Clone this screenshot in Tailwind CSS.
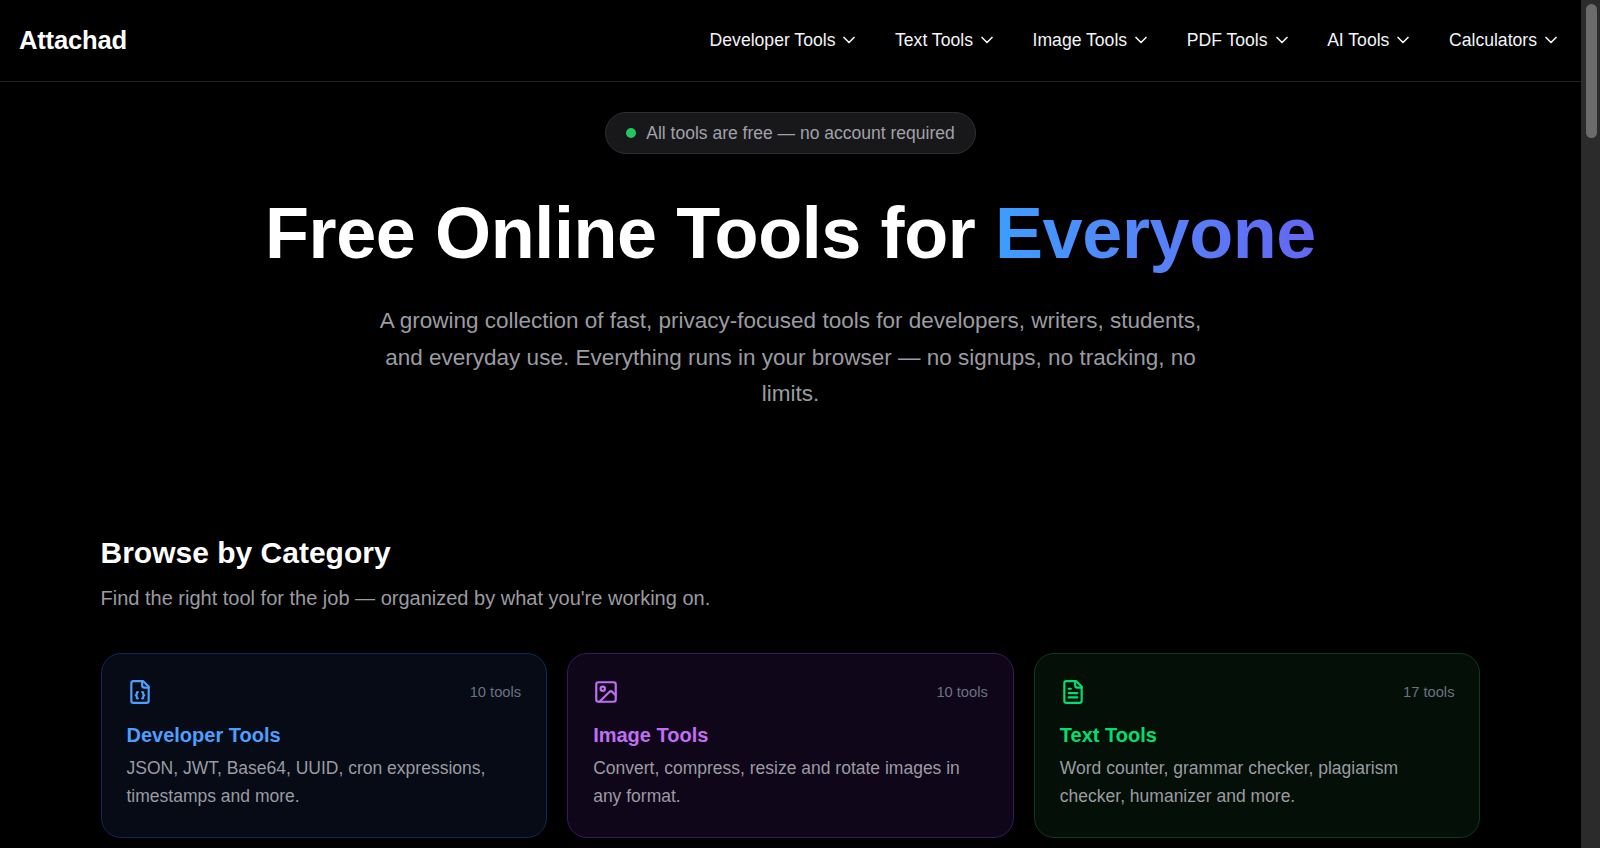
<!DOCTYPE html>
<html lang="en">
<head>
    <meta charset="UTF-8">
    <meta name="viewport" content="width=device-width, initial-scale=1.0">
    <title>Attachad - Free Online Tools for Everyone</title>
    <script src="https://cdn.jsdelivr.net/npm/@tailwindcss/browser@4"></script>
</head>
<body class="bg-black text-white font-['Liberation_Sans',Arial,sans-serif] h-screen overflow-hidden flex">
    <div class="flex-1 min-w-0">
        <!-- Header -->
        <header class="h-[82px] border-b border-[#222222] flex items-center justify-between pl-[19px] pr-5">
            <a href="#" class="text-[25.6px] tracking-[-0.2px] font-bold">Attachad</a>
            <nav class="flex items-center gap-[35.6px] text-[17.6px] text-[#f3f4f6]">
                <a href="#" class="flex items-center gap-1">Developer Tools <svg class="w-5 h-5" viewBox="0 0 24 24" fill="none" stroke="currentColor" stroke-width="2" stroke-linecap="round" stroke-linejoin="round"><path d="m6 9 6 6 6-6"/></svg></a>
                <a href="#" class="flex items-center gap-1">Text Tools <svg class="w-5 h-5" viewBox="0 0 24 24" fill="none" stroke="currentColor" stroke-width="2" stroke-linecap="round" stroke-linejoin="round"><path d="m6 9 6 6 6-6"/></svg></a>
                <a href="#" class="flex items-center gap-1">Image Tools <svg class="w-5 h-5" viewBox="0 0 24 24" fill="none" stroke="currentColor" stroke-width="2" stroke-linecap="round" stroke-linejoin="round"><path d="m6 9 6 6 6-6"/></svg></a>
                <a href="#" class="flex items-center gap-1">PDF Tools <svg class="w-5 h-5" viewBox="0 0 24 24" fill="none" stroke="currentColor" stroke-width="2" stroke-linecap="round" stroke-linejoin="round"><path d="m6 9 6 6 6-6"/></svg></a>
                <a href="#" class="flex items-center gap-1">AI Tools <svg class="w-5 h-5" viewBox="0 0 24 24" fill="none" stroke="currentColor" stroke-width="2" stroke-linecap="round" stroke-linejoin="round"><path d="m6 9 6 6 6-6"/></svg></a>
                <a href="#" class="flex items-center gap-1">Calculators <svg class="w-5 h-5" viewBox="0 0 24 24" fill="none" stroke="currentColor" stroke-width="2" stroke-linecap="round" stroke-linejoin="round"><path d="m6 9 6 6 6-6"/></svg></a>
            </nav>
        </header>

        <!-- Hero -->
        <section class="flex flex-col items-center text-center pt-[30px]">
            <div class="h-[42px] flex items-center gap-2.5 px-5 rounded-full bg-[#18181b] border border-[#2e2e32] text-[17.5px] text-[#a1a1aa]">
                <span class="w-2.5 h-2.5 rounded-full bg-[#22c55e]"></span>
                All tools are free — no account required
            </div>
            <h1 class="mt-[34px] text-[72px] leading-[90px] font-bold tracking-[-0.4px]">Free Online Tools for <span class="bg-linear-to-r from-[#3b9dff] to-[#6366f1] bg-clip-text text-transparent">Everyone</span></h1>
            <p class="mt-[25px] w-[840px] text-[22.5px] leading-[36.5px] text-[#9b9ba1]">A growing collection of fast, privacy-focused tools for developers, writers, students, and everyday use. Everything runs in your browser — no signups, no tracking, no limits.</p>
        </section>

        <!-- Categories -->
        <section class="w-[1380px] mx-auto mt-[122.5px]">
            <h2 class="text-[30px] leading-[36px] font-bold">Browse by Category</h2>
            <p class="mt-[13px] text-xl leading-7 text-[#9b9ba1]">Find the right tool for the job — organized by what you're working on.</p>
            <div class="grid grid-cols-3 gap-5 mt-[41px]">
                <a href="#" class="h-[185px] rounded-[20px] border border-[#10285a] bg-[#060b16] px-[25px] pt-[25px] block">
                    <div class="flex items-center justify-between text-[#4d9fff]">
                        <svg class="w-[26px] h-[26px]" viewBox="0 0 24 24" fill="none" stroke="currentColor" stroke-width="2" stroke-linecap="round" stroke-linejoin="round"><path d="M15 2H6a2 2 0 0 0-2 2v16a2 2 0 0 0 2 2h12a2 2 0 0 0 2-2V7Z"/><path d="M14 2v4a2 2 0 0 0 2 2h4"/><path d="M10 12a1 1 0 0 0-1 1v1a1 1 0 0 1-1 1 1 1 0 0 1 1 1v1a1 1 0 0 0 1 1"/><path d="M14 18a1 1 0 0 0 1-1v-1a1 1 0 0 1 1-1 1 1 0 0 1-1-1v-1a1 1 0 0 0-1-1"/></svg>
                        <span class="text-[14.7px] text-[#6b7280]">10 tools</span>
                    </div>
                    <h3 class="mt-4 text-xl leading-7 font-bold text-[#4d9fff]">Developer Tools</h3>
                    <p class="mt-[5px] text-[17.5px] leading-7 text-[#9b9ba1]">JSON, JWT, Base64, UUID, cron expressions, timestamps and more.</p>
                </a>
                <a href="#" class="h-[185px] rounded-[20px] border border-[#3a1a5c] bg-[#10061a] px-[25px] pt-[25px] block">
                    <div class="flex items-center justify-between text-[#c06ef3]">
                        <svg class="w-[26px] h-[26px]" viewBox="0 0 24 24" fill="none" stroke="currentColor" stroke-width="2" stroke-linecap="round" stroke-linejoin="round"><rect width="18" height="18" x="3" y="3" rx="2" ry="2"/><circle cx="9" cy="9" r="2"/><path d="m21 15-3.086-3.086a2 2 0 0 0-2.828 0L6 21"/></svg>
                        <span class="text-[14.7px] text-[#6b7280]">10 tools</span>
                    </div>
                    <h3 class="mt-4 text-xl leading-7 font-bold text-[#c06ef3]">Image Tools</h3>
                    <p class="mt-[5px] text-[17.5px] leading-7 text-[#9b9ba1]">Convert, compress, resize and rotate images in any format.</p>
                </a>
                <a href="#" class="h-[185px] rounded-[20px] border border-[#0f3a1c] bg-[#040f08] px-[25px] pt-[25px] block">
                    <div class="flex items-center justify-between text-[#00e070]">
                        <svg class="w-[26px] h-[26px]" viewBox="0 0 24 24" fill="none" stroke="currentColor" stroke-width="2" stroke-linecap="round" stroke-linejoin="round"><path d="M15 2H6a2 2 0 0 0-2 2v16a2 2 0 0 0 2 2h12a2 2 0 0 0 2-2V7Z"/><path d="M14 2v4a2 2 0 0 0 2 2h4"/><path d="M10 9H8"/><path d="M16 13H8"/><path d="M16 17H8"/></svg>
                        <span class="text-[14.7px] text-[#6b7280]">17 tools</span>
                    </div>
                    <h3 class="mt-4 text-xl leading-7 font-bold text-[#00e070]">Text Tools</h3>
                    <p class="mt-[5px] text-[17.5px] leading-7 text-[#9b9ba1]">Word counter, grammar checker, plagiarism checker, humanizer and more.</p>
                </a>
            </div>
        </section>
    </div>

    <!-- Scrollbar -->
    <div class="w-[19px] shrink-0 bg-[#2b2b2b] pl-[5px] pr-[3px] pt-1">
        <div class="h-[134px] rounded-full bg-[#6b6b6b]"></div>
    </div>
</body>
</html>
